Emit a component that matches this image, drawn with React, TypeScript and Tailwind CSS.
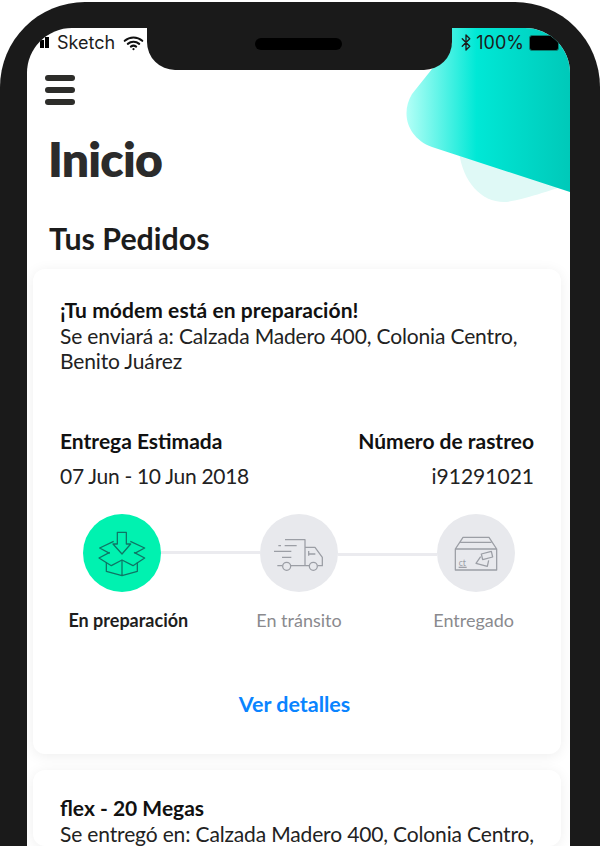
import React from 'react';
import { Bluetooth } from 'lucide-react';

const BoxIcon = () => (
  <svg viewBox="70 40 234 234" className="h-full w-full" fill="none" stroke="#0f7565" strokeWidth="3.8" strokeLinejoin="round">
    <path d="M173 95h27v35h13l-26 30-27-30h13z" />
    <path d="M162 122l-42 20 30 16M212 122l43 20-30 16" />
    <path d="M150 155l-32 17 37 23 32-17 33 17 35-23-32-17" />
    <path d="M187 178v47M140 185v27l47 13 46-13v-27" />
  </svg>
);

const TruckIcon = () => (
  <svg viewBox="30 40 234 234" className="h-full w-full" fill="none" stroke="#9b9ea5" strokeWidth="3.8" strokeLinejoin="round">
    <path d="M105 117h60v78M122 195h55M82 195h15M203 195h14v-25l-22-30h-30" />
    <path d="M176 165v-14M176 160h20" />
    <circle cx="110" cy="197" r="12" />
    <circle cx="190" cy="197" r="12" />
    <path d="M85 135h8M104 135h36M72 152h52M96 170h28" />
  </svg>
);

const ParcelIcon = () => (
  <svg viewBox="562 40 234 234" className="h-full w-full" fill="none" stroke="#9b9ea5" strokeWidth="3.8" strokeLinejoin="round">
    <path d="M617 145h124v63H617zM617 145l23-35h78l23 35M632 125h93" />
    <path d="M695 160l30-8 4 17-30 8zM693 168l-14 20 34 9 4-18" />
    <path d="M627 200h24" />
    <text x="627" y="196" fontSize="26" fill="#9b9ea5" stroke="none" fontFamily="Lato, sans-serif">ct</text>
  </svg>
);

const StatusBar = () => (
  <div className="relative z-10 flex h-[29px] items-center justify-between text-[18px] leading-none text-[#1c1c1c] [font-family:Inter,sans-serif]">
    <div className="flex items-center">
      <div className="ml-[13px] flex h-[11px] items-end gap-[1px]">
        <span className="h-[8px] w-[4px] bg-black" />
        <span className="h-[11px] w-[4px] bg-black" />
      </div>
      <span className="ml-[8px]">Sketch</span>
      <svg viewBox="0 0 24 18" className="ml-[8px] h-[16px] w-[21px]" fill="none" stroke="#111" strokeWidth="2.4" strokeLinecap="round">
        <path d="M2 6.500c5.600-5 14.400-5 20 0M5.500 10c3.700-3.200 9.300-3.200 13 0M9 13.200c1.800-1.400 4.200-1.400 6 0" />
        <circle cx="12" cy="16" r="1.200" fill="#111" stroke="none" />
      </svg>
    </div>
    <div className="flex items-center pr-[11px]">
      <Bluetooth className="h-[23px] w-[18px]" strokeWidth={1.8} />
      <span className="ml-[1px]">100%</span>
      <div className="ml-[5px] h-[16px] w-[30px] rounded-[3px] border border-[#0a7f72] bg-black" />
    </div>
  </div>
);

const Steps = () => (
  <div className="mt-[25px]">
    <div className="flex items-center pl-[50px] pr-[46px]">
      <div className="h-[78px] w-[78px] shrink-0 rounded-full bg-[#00f2b0]">
        <BoxIcon />
      </div>
      <div className="h-[3px] flex-1 bg-[#ebebef]" />
      <div className="h-[78px] w-[78px] shrink-0 rounded-full bg-[#e8e9ed]">
        <TruckIcon />
      </div>
      <div className="mt-[3px] h-[3px] flex-1 bg-[#ebebef]" />
      <div className="h-[78px] w-[78px] shrink-0 rounded-full bg-[#e8e9ed]">
        <ParcelIcon />
      </div>
    </div>
    <div className="mt-[17px] grid grid-cols-3 pl-[4px] text-center text-[18px] leading-[22px]">
      <span className="pl-[8px] font-bold text-[#1e1e1e]">En preparación</span>
      <span className="text-[#8a8a8e]">En tránsito</span>
      <span className="text-[#8a8a8e]">Entregado</span>
    </div>
  </div>
);

export default function App() {
  return (
    <div className="h-[846px] w-[600px] overflow-hidden bg-white pt-[2px] [font-family:Lato,sans-serif]">
      <div className="relative h-[900px] rounded-t-[85px] bg-[#1a1a1a] pl-[27px] pr-[30px] pt-[26px]">
        {/* notch */}
        <div className="absolute left-[147px] top-0 z-20 h-[68px] w-[305px] rounded-b-[28px] bg-[#1a1a1a]">
          <div className="absolute left-[108px] top-[36px] h-[12px] w-[87px] rounded-full bg-black" />
        </div>

        <div className="relative h-[880px] overflow-hidden rounded-t-[45px] bg-white">
          {/* teal blobs */}
          <svg className="absolute right-0 top-0 h-[210px] w-[200px]" viewBox="370 28 200 210">
            <defs>
              <linearGradient id="tealFade" x1="406" y1="0" x2="570" y2="0" gradientUnits="userSpaceOnUse">
                <stop offset="0" stopColor="#b4fff7" />
                <stop offset="0.43" stopColor="#00e8d6" />
                <stop offset="1" stopColor="#00c9b9" />
              </linearGradient>
            </defs>
            <path d="M459 152c4 30 22 50 45 50 10 0 36-8 66-18v-40z" fill="#dff9f6" />
            <path d="M452 28v16L412 94c-12 20-4 44 20 53l138 45V28z" fill="url(#tealFade)" />
          </svg>

          <div className="relative">
            <StatusBar />
            <div className="ml-[18px] mt-[18px] flex w-[30px] flex-col gap-[6px]">
              <span className="h-[6px] rounded-full bg-[#2d2d2a]" />
              <span className="h-[6px] rounded-full bg-[#2d2d2a]" />
              <span className="h-[6px] rounded-full bg-[#2d2d2a]" />
            </div>
            <h1 className="ml-[21px] mt-[24px] text-[48px] font-extrabold leading-[60px] tracking-[-0.8px] text-[#2b2b2b]">Inicio</h1>
            <h2 className="ml-[22px] mt-[30px] text-[30.400px] font-bold leading-[38px] text-[#1c1c1c]">Tus Pedidos</h2>

            <div className="ml-[6px] mr-[9px] mt-[12px] h-[485px] rounded-[12px] bg-white pt-[28px] shadow-[0_2px_14px_rgba(0,0,0,0.07)]">
              <div className="px-[27px] text-[21px] leading-[25.500px] text-[#222]">
                <p className="font-bold tracking-[0.07px] text-[#111]">¡Tu módem está en preparación!</p>
                <p className="tracking-[-0.15px]">Se enviará a: Calzada Madero 400, Colonia Centro, Benito Juárez</p>
                <div className="mt-[54px] flex justify-between">
                  <div>
                    <p className="font-bold text-[#111]">Entrega Estimada</p>
                    <p className="mt-[10px] tracking-[-0.3px]">07 Jun - 10 Jun 2018</p>
                  </div>
                  <div className="text-right">
                    <p className="font-bold text-[#111]">Número de rastreo</p>
                    <p className="mt-[10px]">i91291021</p>
                  </div>
                </div>
              </div>
              <Steps />
              <p className="mt-[60px] pr-[5px] text-center text-[21.500px] font-bold leading-[26px] text-[#0a84ff]">Ver detalles</p>
            </div>

            <div className="ml-[6px] mr-[9px] mt-[16px] rounded-[12px] bg-white pl-[27px] pr-[18px] pt-[25px] text-[21px] leading-[25.500px] text-[#222] shadow-[0_2px_14px_rgba(0,0,0,0.07)]">
              <p className="font-bold text-[#111]">flex - 20 Megas</p>
              <p className="tracking-[-0.15px]">Se entregó en: Calzada Madero 400, Colonia Centro,</p>
            </div>
          </div>
        </div>
      </div>
    </div>
  );
}
